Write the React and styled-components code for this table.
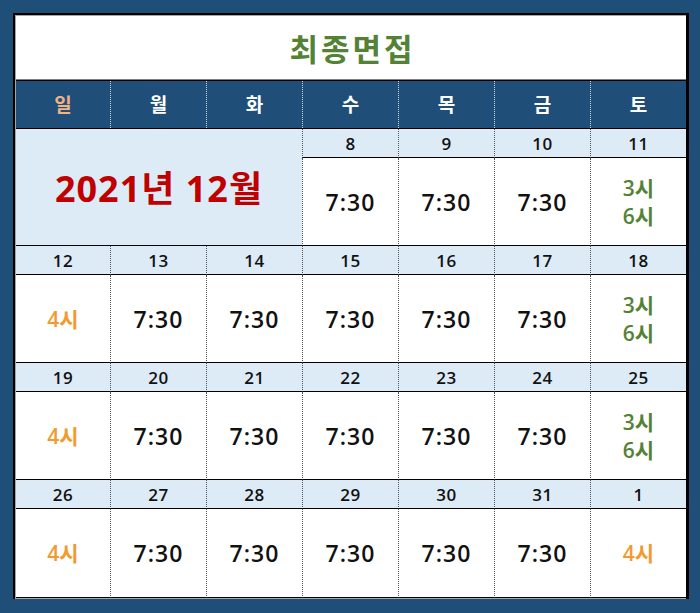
import React from "react"
import styled, { createGlobalStyle } from "styled-components"

const GlobalStyle = createGlobalStyle`
  body {
    margin: 0;
    background: #1f4e79;
    font-family: "Open Sans", "Noto Sans CJK KR", sans-serif;
  }
`

const days = ["일", "월", "화", "수", "목", "금", "토"]

const weeks = [
  ["", "", "", "8", "9", "10", "11"],
  ["12", "13", "14", "15", "16", "17", "18"],
  ["19", "20", "21", "22", "23", "24", "25"],
  ["26", "27", "28", "29", "30", "31", "1"],
]

function slot(col, date) {
  if (col === 0 || date === "1") return { kind: "orange", lines: ["4시"] }
  if (col === 6) return { kind: "green", lines: ["3시", "6시"] }
  return { kind: "black", lines: ["7:30"] }
}

export default function App() {
  return (
    <>
      <GlobalStyle />
      <Frame>
        <Table>
          <Title>최종면접</Title>
          <Header>
            {days.map((d, i) => (
              <DayName key={d} first={i === 0} sunday={i === 0}>{d}</DayName>
            ))}
          </Header>
          {weeks.map((week, w) => (
            <Week key={w} last={w === weeks.length - 1}>
              {w === 0 && <MonthCell>2021년 12월</MonthCell>}
              {week.map((date, i) => {
                if (w === 0 && i < 3) return null
                return (
                  <DateCell key={"d" + i} col={i + 1} first={i === 0}>{date}</DateCell>
                )
              })}
              {week.map((date, i) => {
                if (w === 0 && i < 3) return null
                const s = slot(i, date)
                return (
                  <SlotCell key={"s" + i} col={i + 1} first={i === 0} kind={s.kind}>
                    {s.lines.map(l => <span key={l}>{l}</span>)}
                  </SlotCell>
                )
              })}
            </Week>
          ))}
        </Table>
      </Frame>
    </>
  )
}

const Frame = styled.div`
  margin: 13px 0 0 13px;
  width: 671px;
  border-top: 2px solid #000;
  border-left: 2px solid #000;
  border-right: 3px solid #000;
`

const Table = styled.div`
  border-top: 1px solid #a6a6a6;
  border-left: 1px solid #a6a6a6;
  border-bottom: 1px solid #a6a6a6;
  background: #fff;
`

const Title = styled.div`
  height: 63px;
  display: flex;
  align-items: center;
  justify-content: center;
  font-family: "Noto Sans CJK KR", sans-serif;
  font-size: 31px;
  font-weight: 700;
  color: #548235;
  border-bottom: 1px solid #7f7f7f;
  letter-spacing: 3px;
  padding-left: 3px;
`

const Header = styled.div`
  display: grid;
  grid-template-columns: 94px repeat(6, 96px);
  height: 49px;
  background: #1f4e79;
  border-top: 1px solid #000;
  border-bottom: 1px solid #000;
  box-sizing: border-box;
`

const DayName = styled.div`
  display: flex;
  align-items: center;
  justify-content: center;
  font-size: 19px;
  font-weight: 700;
  color: ${props => props.sunday ? "#f4b183" : "#fff"};
  border-left: ${props => props.first ? "none" : "1px dotted #c9d3dd"};
  padding-bottom: 1px;
`

const Week = styled.div`
  display: grid;
  grid-template-columns: 94px repeat(6, 96px);
  grid-template-rows: 29px ${props => props.last ? "89px" : "88px"};
`

const MonthCell = styled.div`
  grid-column: 1 / span 3;
  grid-row: 1 / span 2;
  background: #ddebf7;
  border-bottom: 1px solid #000;
  display: flex;
  align-items: center;
  justify-content: center;
  font-size: 36px;
  font-weight: 700;
  letter-spacing: 1px;
  color: #c00000;
  padding-bottom: 2px;
`

const Cell = styled.div`
  grid-column: ${props => props.col};
  box-sizing: border-box;
  border-left: ${props => props.first ? "none" : "1px dotted #555"};
  border-bottom: 1px solid #000;
  display: flex;
  align-items: center;
  justify-content: center;
`

const DateCell = styled(Cell)`
  grid-row: 1;
  background: #ddebf7;
  font-size: 17px;
  font-weight: 600;
  color: #111;
  letter-spacing: 0.5px;
`

const colors = { black: "#111", orange: "#f29a2e", green: "#548235" }

const SlotCell = styled(Cell)`
  grid-row: 2;
  flex-direction: column;
  color: ${props => colors[props.kind]};
  font-size: ${props => props.kind === "black" ? "23px" : "21px"};
  font-weight: 600;
  line-height: 28px;
  letter-spacing: ${props => props.kind === "black" ? "1px" : "0"};
`
